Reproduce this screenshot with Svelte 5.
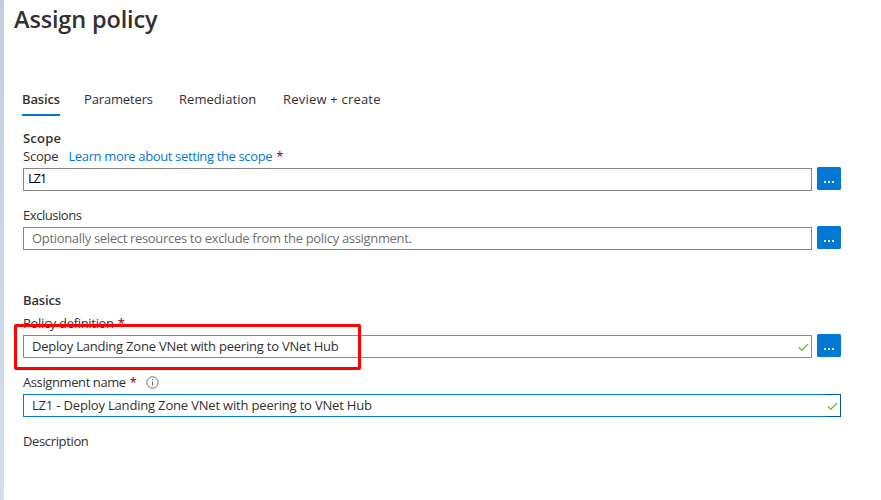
<script>
  const tabs = [
    { label: 'Basics', id: 'basics' },
    { label: 'Parameters', id: 'parameters' },
    { label: 'Remediation', id: 'remediation' },
    { label: 'Review + create', id: 'review' }
  ];
  let active = $state('basics');
</script>

{#snippet check()}
  <svg class="check" width="11" height="9" viewBox="0 0 11 9" aria-hidden="true">
    <path d="M.7 4.2 3.8 7.2 10.2 1" fill="none" stroke="#7fba42" stroke-width="1.4" />
  </svg>
{/snippet}

{#snippet browse()}
  <button class="browse" aria-label="Browse"><i></i><i></i><i></i></button>
{/snippet}

<main>
  <h1>Assign policy</h1>
  <nav>
    {#each tabs as tab}
      <button class={['tab', tab.id, active === tab.id && 'active']} onclick={() => (active = tab.id)}>{tab.label}</button>
    {/each}
  </nav>

  <section class="scope">
    <h2 class="scope-title">Scope</h2>
    <div class="label"><span class="scope-label">Scope</span><a class="learn" href="#scope">Learn more about setting the scope</a><b>*</b></div>
    <div class="row"><div class="field tight"><span class="lz">LZ1</span></div>{@render browse()}</div>
    <div class="label second"><span class="exclusions">Exclusions</span></div>
    <div class="row"><div class="field"><span class="hint">Optionally select resources to exclude from the policy assignment.</span></div>{@render browse()}</div>
  </section>

  <section class="basics-section">
    <h2 class="basics-title">Basics</h2>
    <div class="label policy-row"><span class="policy">Policy definition</span><b>*</b></div>
    <div class="row"><div class="field"><span class="definition">Deploy Landing Zone VNet with peering to VNet Hub</span>{@render check()}</div>{@render browse()}</div>
    <div class="label second"><span class="assignment">Assignment name</span><b>*</b>
      <svg class="info" width="13" height="13" viewBox="0 0 13 13" aria-hidden="true">
        <circle cx="6.5" cy="6.5" r="5.7" fill="none" stroke="#706f6e" />
        <path d="M6.5 5.5v4M6.5 3v1.2" stroke="#706f6e" />
      </svg>
    </div>
    <div class="row"><div class="field focus"><span class="name">LZ1 - Deploy Landing Zone VNet with peering to VNet Hub</span>{@render check()}</div></div>
    <div class="label second"><span class="description">Description</span></div>
  </section>
  <div class="highlight"></div>
</main>

<style>
  :global(body) { margin: 0; background: #fff; }
  main {
    position: relative;
    box-sizing: border-box;
    width: 881px;
    height: 500px;
    overflow: hidden;
    padding-left: 19px;
    border-left: 4px solid #ccd5e7;
    border-image: linear-gradient(#c4cde0, #d4deee) 1;
    border-width: 0 0 0 4px;
    font: 13px/18px "Segoe UI", "Open Sans", "Noto Sans", sans-serif;
    color: #323130;
  }
  h1, h2 { margin: 0; font-weight: 600; white-space: nowrap; }
  h1 { margin-left: -9px; height: 40px; font-size: 23.5px; line-height: 39px; letter-spacing: -.15px; }
  nav { display: flex; margin: 50px 0 0 -1px; height: 26px; gap: 24px; }
  .tab {
    box-sizing: border-box; padding: 0 0 6px; border: 0; border-bottom: 2px solid transparent; background: none;
    font: inherit; line-height: 18px; height: 26px; color: inherit;
    text-align: left; white-space: nowrap;
  }
  .tab.active { border-color: #0078d4; font-weight: 600; }
  .basics { width: 38px; letter-spacing: -.15px; }
  .parameters { width: 71px; letter-spacing: -.15px; }
  .remediation { width: 80px; letter-spacing: .05px; }
  .review { letter-spacing: .2px; }
  .scope { padding-top: 13px; }
  h2 { height: 18px; font-size: 13px; line-height: 18px; }
  .scope-title { letter-spacing: .2px; }
  .basics-title { letter-spacing: -.15px; }
  .label { display: flex; height: 21px; line-height: 18px; white-space: nowrap; }
  .label.second { height: 21px; padding-top: 15px; }
  .label b { margin-left: 4px; color: #a4262c; font-weight: 600; }
  .scope-label { letter-spacing: -.2px; }
  .learn { margin-left: 10px; color: #0078d4; text-decoration: none; letter-spacing: -.36px; }
  .exclusions { letter-spacing: -.45px; }
  .policy { letter-spacing: -.32px; }
  .assignment { letter-spacing: -.4px; }
  .description { letter-spacing: -.36px; }
  .lz { letter-spacing: -1.3px; }
  .hint { color: #6f6e6d; letter-spacing: -.32px; }
  .definition { letter-spacing: -.215px; }
  .name { letter-spacing: -.18px; }
  .row { display: flex; width: 818px; height: 23px; gap: 5px; }
  .field {
    display: flex; flex: 1; align-items: center; justify-content: space-between;
    box-sizing: border-box; height: 23px; padding: 0 2px 2px 8px;
    border: 1px solid #8a8886; background: #fff; white-space: nowrap;
  }
  .tight { padding-left: 4px; padding-bottom: 3px; color: #000; }
  .focus { border-image: linear-gradient(to right, #0078d4 804px, #005a9e 804px) 1; }
  .check { margin-top: 3px; }
  .browse {
    display: flex; gap: 2px; align-items: flex-start; justify-content: center;
    box-sizing: border-box; width: 24px; height: 23px; margin-top: -1px;
    padding: 14px 0 0; border: 0; border-radius: 1.5px; background: #0078d4;
  }
  .browse i { width: 2px; height: 2px; background: #e8f3fb; }
  .basics-section { padding-top: 41px; }
  .policy-row { box-sizing: border-box; height: 26px; padding-top: 5px; }
  .label.second { box-sizing: border-box; height: 36px; }
  .info { margin: 3px 0 0 9px; }
  .highlight {
    position: absolute; left: 10px; top: 324px; width: 347px; height: 46px;
    box-sizing: border-box; border: 3px solid #f00; border-radius: 2px;
  }
  .browse, .tab, .learn { cursor: pointer; }
</style>
